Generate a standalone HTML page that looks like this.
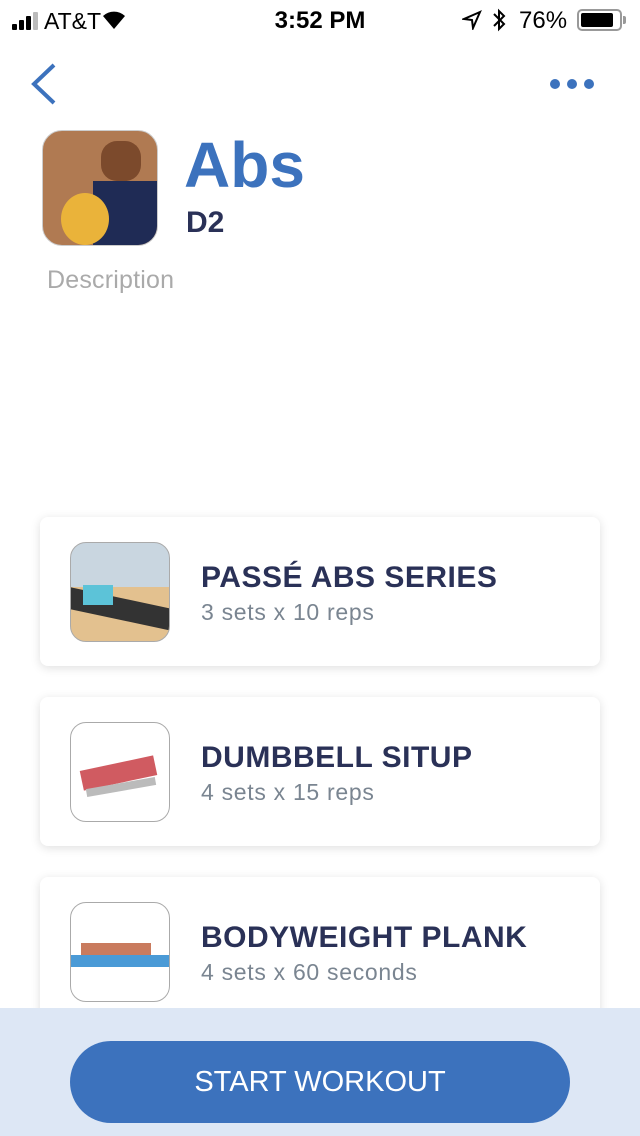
<!DOCTYPE html>
<html><head><meta charset="utf-8"><style>
*{margin:0;padding:0;box-sizing:border-box}
body{width:640px;height:1136px;overflow:hidden;background:#fff;font-family:"Liberation Sans",sans-serif;position:relative}
.abs{position:absolute}
.sb{font-size:23px;color:#000;top:8px}
.card{position:absolute;left:40px;width:560px;height:149px;background:#fff;border-radius:8px;box-shadow:0 2px 10px rgba(0,0,0,0.13)}
.thumb{position:absolute;left:30px;top:25px;width:100px;height:100px;border-radius:16px;border:1px solid #aaa;overflow:hidden}
.t{position:absolute;left:161px;top:44px;font-size:30px;font-weight:bold;color:#2a3157;letter-spacing:0.5px}
.s{position:absolute;left:161px;top:82px;font-size:23px;color:#7a8591;letter-spacing:0.7px}
</style></head><body>
<div class="abs" style="left:12px;top:24px;width:5px;height:6px;background:#000;border-radius:1px"></div>
<div class="abs" style="left:19px;top:20px;width:5px;height:10px;background:#000;border-radius:1px"></div>
<div class="abs" style="left:26px;top:16px;width:5px;height:14px;background:#000;border-radius:1px"></div>
<div class="abs" style="left:33px;top:12px;width:5px;height:18px;background:#bbb;border-radius:1px"></div>
<div class="abs sb" style="left:44px">AT&amp;T</div>
<svg class="abs" style="left:102px;top:10px" width="24" height="20" viewBox="0 0 24 20"><path d="M12 19 L1 6 A16 16 0 0 1 23 6 Z" fill="#000"/></svg>
<div class="abs sb" style="left:0;width:640px;text-align:center;font-weight:bold;font-size:24px;top:7px">3:52 PM</div>
<svg class="abs" style="left:462px;top:10px" width="20" height="20" viewBox="0 0 20 20"><path d="M18 2 L2 9 L10 10 L11 18 Z" fill="none" stroke="#000" stroke-width="2"/></svg>
<svg class="abs" style="left:491px;top:8px" width="16" height="24" viewBox="0 0 16 24"><path d="M3 6 L13 16 L8 21 V3 L13 8 L3 18" fill="none" stroke="#000" stroke-width="2"/></svg>
<div class="abs sb" style="left:519px;font-size:24px;top:7px">76%</div>
<div class="abs" style="left:577px;top:9px;width:45px;height:22px;border:2px solid #999;border-radius:5px"><div style="position:absolute;left:2px;top:2px;width:32px;height:14px;background:#000;border-radius:2px"></div></div>
<div class="abs" style="left:623px;top:16px;width:3px;height:8px;background:#999;border-radius:0 2px 2px 0"></div>
<svg class="abs" style="left:28px;top:62px" width="30" height="44" viewBox="0 0 30 44"><path d="M26 3 L6 22 L26 41" fill="none" stroke="#3c72bd" stroke-width="4"/></svg>
<div class="abs" style="left:550px;top:79px;width:10px;height:10px;border-radius:50%;background:#3c72bd"></div>
<div class="abs" style="left:567px;top:79px;width:10px;height:10px;border-radius:50%;background:#3c72bd"></div>
<div class="abs" style="left:584px;top:79px;width:10px;height:10px;border-radius:50%;background:#3c72bd"></div>
<div class="abs" style="left:42px;top:130px;width:116px;height:116px;border-radius:20px;overflow:hidden;background:#b07a52;border:1px solid #ccc">
<div style="position:absolute;left:50px;top:50px;width:80px;height:70px;background:#1f2b55"></div>
<div style="position:absolute;left:18px;top:62px;width:48px;height:52px;border-radius:50%;background:#eab33a"></div>
<div style="position:absolute;left:58px;top:10px;width:40px;height:40px;background:#7c4a2c;border-radius:40%"></div>
</div>
<div class="abs" style="left:184px;top:128px;font-size:64px;font-weight:bold;color:#3c72bd">Abs</div>
<div class="abs" style="left:186px;top:206px;font-size:30px;font-weight:bold;color:#2a3157">D2</div>
<div class="abs" style="left:47px;top:266px;font-size:25px;color:#aaa;letter-spacing:0.2px">Description</div>
<div class="card" style="top:517px"><div class="thumb" style="background:linear-gradient(#c9d6e0 0 45%,#e3c18f 45%)"><div style="position:absolute;left:0;top:55px;width:100px;height:22px;background:#333;transform:skewY(12deg)"></div><div style="position:absolute;left:12px;top:42px;width:30px;height:20px;background:#5cc3d8"></div></div><div class="t">PASSÉ ABS SERIES</div><div class="s">3 sets x 10 reps</div></div>
<div class="card" style="top:697px"><div class="thumb" style="background:#fff"><div style="position:absolute;left:10px;top:40px;width:75px;height:20px;background:#c4323a;transform:rotate(-12deg);opacity:.8"></div><div style="position:absolute;left:15px;top:60px;width:70px;height:8px;background:#bbb;transform:rotate(-10deg)"></div></div><div class="t">DUMBBELL SITUP</div><div class="s">4 sets x 15 reps</div></div>
<div class="card" style="top:877px"><div class="thumb" style="background:#fff"><div style="position:absolute;left:0;top:52px;width:100px;height:12px;background:#4a9ad6"></div><div style="position:absolute;left:10px;top:40px;width:70px;height:12px;background:#c97b5e"></div></div><div class="t">BODYWEIGHT PLANK</div><div class="s">4 sets x 60 seconds</div></div>
<div class="abs" style="left:0;top:1008px;width:640px;height:128px;background:#dde7f5"></div>
<div class="abs" style="left:70px;top:1041px;width:500px;height:82px;border-radius:41px;background:#3c72bd;color:#fff;font-size:29px;text-align:center;line-height:82px">START WORKOUT</div>
</body></html>
